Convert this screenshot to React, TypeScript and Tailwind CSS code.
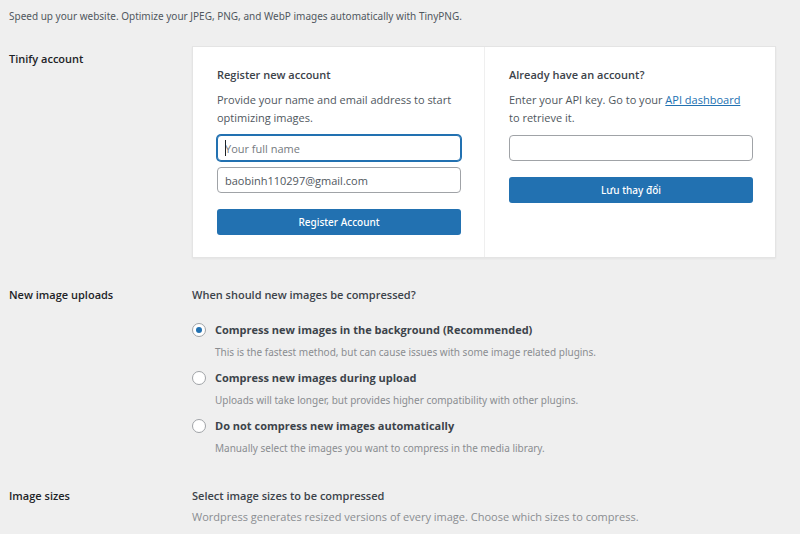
import * as React from 'react';
import { useState } from 'react';
import { clsx } from 'clsx';

const compressionTimings = [
  {
    id: 'background',
    label: 'Compress new images in the background (Recommended)',
    description: 'This is the fastest method, but can cause issues with some image related plugins.',
  },
  {
    id: 'auto',
    label: 'Compress new images during upload',
    description: 'Uploads will take longer, but provides higher compatibility with other plugins.',
  },
  {
    id: 'manual',
    label: 'Do not compress new images automatically',
    description: 'Manually select the images you want to compress in the media library.',
  },
] as const;

const inputClass =
  'block h-[26px] w-full rounded-[4px] border bg-white px-[7px] text-[11px] text-[#50575e] placeholder:text-[#757a80] focus:outline-none';
const buttonClass =
  "mt-4 block h-[26px] w-full cursor-pointer rounded-[3px] bg-[#2271b1] font-['Segoe_UI','Noto_Sans',sans-serif] text-[10px] font-medium text-white hover:bg-[#135e96]";
const smallTextClass = "font-['Segoe_UI','Noto_Sans',sans-serif] text-[10px]";

function SettingsRow({ title, className, children }: { title: string; className?: string; children: React.ReactNode }) {
  return (
    <section className={clsx('flex items-start', className)}>
      <h2 className="w-[183px] shrink-0 font-semibold text-[#1d2327]">{title}</h2>
      <div className="min-w-0 flex-1">{children}</div>
    </section>
  );
}

export default function App() {
  const [name, setName] = useState('');
  const [email, setEmail] = useState('baobinh110297@gmail.com');
  const [apiKey, setApiKey] = useState('');
  const [timing, setTiming] = useState<string>('background');

  return (
    <main className="min-h-screen bg-[#efefef] pt-2 pr-6 pl-[9px] font-['Segoe_UI','Open_Sans','Noto_Sans',sans-serif] text-[11px] leading-[18px] text-[#50575e]">
      <p className={clsx(smallTextClass, 'leading-4')}>
        Speed up your website. Optimize your JPEG, PNG, and WebP images automatically with TinyPNG.
      </p>

      <section className="mt-[22px] flex items-start">
        <h2 className="w-[183px] shrink-0 pt-1 font-semibold text-[#1d2327]">Tinify account</h2>
        <div className="grid min-w-0 flex-1 grid-cols-2 border border-[#e4e4e4] bg-white shadow-xs">
          <form className="pt-[19px] pr-[23px] pb-[22px] pl-6" onSubmit={(e) => e.preventDefault()}>
            <h3 className="font-semibold text-[#3c434a]">Register new account</h3>
            <p className="mt-[7px]">Provide your name and email address to start optimizing images.</p>
            <div className="relative mt-2">
              <input
                type="text"
                aria-label="Your full name"
                placeholder="Your full name"
                value={name}
                onChange={(e) => setName(e.target.value)}
                className={clsx(inputClass, 'border-[#2271b1] caret-transparent ring-1 ring-[#2271b1]')}
              />
              {/* text cursor */}
              {name === '' && <span className="absolute top-[5px] left-2 h-4 w-px bg-[#1d2327]" />}
            </div>
            <input
              type="email"
              aria-label="Your email address"
              value={email}
              onChange={(e) => setEmail(e.target.value)}
              className={clsx(inputClass, 'mt-[6px] border-[#a0a3a7]')}
            />
            <button type="submit" className={buttonClass}>
              Register Account
            </button>
          </form>

          <form className="border-l border-[#efefef] pt-[19px] pr-[22px] pb-[22px] pl-6" onSubmit={(e) => e.preventDefault()}>
            <h3 className="font-semibold text-[#3c434a]">Already have an account?</h3>
            <p className="mt-[7px]">
              Enter your API key. Go to your{' '}
              <a href="#dashboard" className="text-[#2271b1] underline">
                API dashboard
              </a>{' '}
              to retrieve it.
            </p>
            <input
              type="text"
              aria-label="API key"
              value={apiKey}
              onChange={(e) => setApiKey(e.target.value)}
              className={clsx(inputClass, 'mt-2 border-[#a0a3a7]')}
            />
            <button type="submit" className={buttonClass}>
              Lưu thay đổi
            </button>
          </form>
        </div>
      </section>

      <SettingsRow title="New image uploads" className="mt-7">
        <h3 id="timing-title" className="font-semibold text-[#3c434a]">
          When should new images be compressed?
        </h3>
        <div role="radiogroup" aria-labelledby="timing-title" className="mt-[17px] space-y-2">
          {compressionTimings.map((option) => (
            <div key={option.id} className="flex items-start gap-[9px]">
              <input
                type="radio"
                id={option.id}
                name="timing"
                checked={timing === option.id}
                onChange={() => setTiming(option.id)}
                className="mt-[2px] grid size-[14px] shrink-0 appearance-none place-items-center rounded-full border border-[#a0a3a7] bg-white checked:before:size-[6px] checked:before:rounded-full checked:before:bg-[#2271b1] checked:before:content-['']"
              />
              <div>
                <label htmlFor={option.id} className="block font-bold text-[#3c434a]">
                  {option.label}
                </label>
                <p className={clsx(smallTextClass, 'mt-1 text-[#8a8d91]')}>{option.description}</p>
              </div>
            </div>
          ))}
        </div>
      </SettingsRow>

      <SettingsRow title="Image sizes" className="mt-[30px]">
        <h3 className="font-semibold text-[#3c434a]">Select image sizes to be compressed</h3>
        <p className="mt-[3px] text-[#8a8d91]">
          Wordpress generates resized versions of every image. Choose which sizes to compress.
        </p>
      </SettingsRow>
    </main>
  );
}
